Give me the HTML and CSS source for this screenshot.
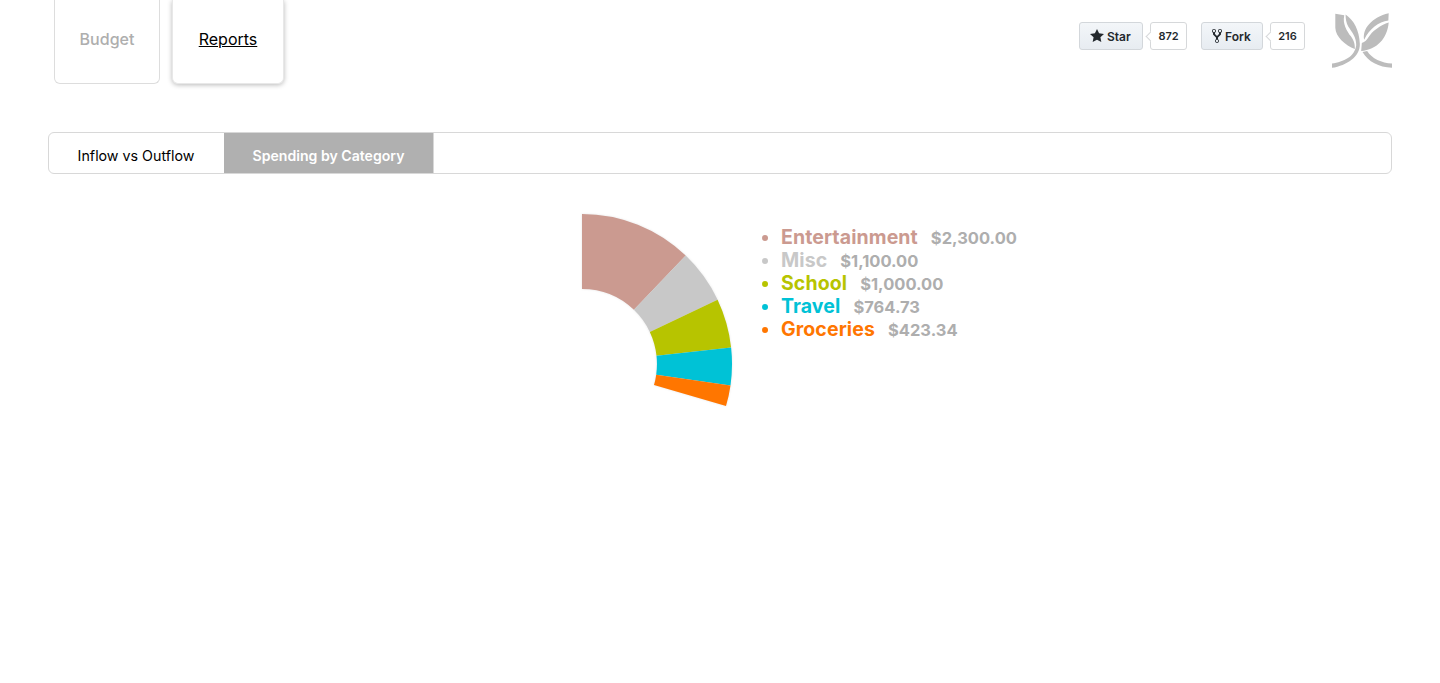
FILE: index.html
```html
<!DOCTYPE html>
<html lang="en">
<head>
<meta charset="utf-8">
<title>Reports</title>
<link rel="stylesheet" href="styles.css">
</head>
<body>
<header class="header">
  <nav class="nav">
    <a class="nav-card budget">Budget</a>
    <a class="nav-card active">Reports</a>
  </nav>
  <div class="gh">
    <div class="gh-group">
      <span class="gh-btn"><svg class="ic-star" viewBox="0 0 14 16"><path d="M14 6l-4.9-.64L7 1 4.9 5.36 0 6l3.6 3.26L2.67 14 7 11.67 11.33 14l-.93-4.74L14 6z"/></svg>Star</span>
      <span class="gh-count">872</span>
    </div>
    <div class="gh-group">
      <span class="gh-btn"><svg class="ic-fork" viewBox="0 0 10 16"><path d="M8 1a1.993 1.993 0 0 0-1 3.72V6L5 8 3 6V4.72A1.993 1.993 0 0 0 2 1a1.993 1.993 0 0 0-1 3.72V6.5l3 3v1.78A1.993 1.993 0 0 0 5 15a1.993 1.993 0 0 0 1-3.72V9.5l3-3V4.72A1.993 1.993 0 0 0 8 1zM2 4.2C1.34 4.2.8 3.65.8 3c0-.65.55-1.2 1.2-1.2.65 0 1.2.55 1.2 1.2 0 .65-.55 1.2-1.2 1.2zm3 10c-.66 0-1.2-.55-1.2-1.2 0-.65.55-1.2 1.2-1.2.65 0 1.2.55 1.2 1.2 0 .65-.55 1.2-1.2 1.2zm3-10c-.66 0-1.2-.55-1.2-1.2 0-.65.55-1.2 1.2-1.2.65 0 1.2.55 1.2 1.2 0 .65-.55 1.2-1.2 1.2z"/></svg>Fork</span>
      <span class="gh-count">216</span>
    </div>
  </div>
  <svg class="logo" viewBox="815 38 181 165">
    <path d="M825 40 L852 44 C846 70 860 92 872 108 C882 122 884 132 884 146 C855 135 826 110 825 82 Z"/>
    <path d="M856 42 C882 60 897 90 899 130 C900 170 860 195 815 203 L815 190 C850 185 884 170 888 135 C889 110 875 95 864 78 C858 68 856 55 856 42 Z"/>
    <path d="M986 38 L985 60 C955 64 928 85 912 118 C906 85 935 50 986 38 Z"/>
    <path d="M986 66 C982 115 950 148 903 152 L905 128 C925 122 925 100 950 85 C960 76 975 70 986 66 Z"/>
    <path d="M921 152 C935 175 965 188 996 190 L996 203 C955 200 925 185 907 155 Z"/>
  </svg>
</header>

<main class="main">
  <div class="tabs">
    <a class="tab">Inflow vs Outflow</a>
    <a class="tab tab-active">Spending by Category</a>
  </div>
  <section class="report">
    <svg class="chart" viewBox="0 0 300 300" width="300" height="300">
      <path class="s-ent" d="M150 0 A150 150 0 0 1 253.7 41.6 L201.9 95.8 A75 75 0 0 0 150 75 Z"/>
      <path class="s-misc" d="M253.7 41.6 A150 150 0 0 1 285.6 85.8 L217.8 117.9 A75 75 0 0 0 201.9 95.8 Z"/>
      <path class="s-school" d="M285.6 85.8 A150 150 0 0 1 299.1 133.5 L224.5 141.8 A75 75 0 0 0 217.8 117.9 Z"/>
      <path class="s-travel" d="M299.1 133.5 A150 150 0 0 1 298.5 171.4 L224.2 160.7 A75 75 0 0 0 224.5 141.8 Z"/>
      <path class="s-groc" d="M298.5 171.4 A150 150 0 0 1 294 192.1 L222 171.1 A75 75 0 0 0 224.2 160.7 Z"/>
    </svg>
    <ul class="legend">
      <li class="c-ent"><span class="name">Entertainment</span><span class="amt">$2,300.00</span></li>
      <li class="c-misc"><span class="name">Misc</span><span class="amt">$1,100.00</span></li>
      <li class="c-school"><span class="name">School</span><span class="amt">$1,000.00</span></li>
      <li class="c-travel"><span class="name">Travel</span><span class="amt">$764.73</span></li>
      <li class="c-groc"><span class="name">Groceries</span><span class="amt">$423.34</span></li>
    </ul>
  </section>
</main>
</body>
</html>
```
FILE: styles.css
```css
* { box-sizing: border-box; }
html, body { margin: 0; padding: 0; background: #fff; }
body { font-family: Inter, "Liberation Sans", sans-serif; color: #000; height: 683px; overflow: hidden; }

.header { display: flex; align-items: flex-start; padding: 0 48px 0 54px; height: 84px; }
.nav { display: flex; gap: 12px; }
.nav-card {
  display: flex; align-items: center; justify-content: center;
  height: 84px; padding-bottom: 5px; font-size: 16px;
  background: #fff; border: 1px solid #ddd; border-top: 0; border-radius: 0 0 6px 6px;
}
.budget { width: 106px; color: #aeaeae; font-weight: 500; }
.active { width: 112px; color: #000; text-decoration: underline; box-shadow: 0 1px 5px rgba(0,0,0,.28); border-color: #e8e8e8; }

.gh { display: flex; gap: 14px; margin-left: auto; margin-top: 22px; margin-right: 27px; }
.gh-group { display: flex; gap: 7px; }
.gh-btn {
  display: flex; align-items: center; gap: 3px; height: 28px; padding: 0 10px;
  font-size: 12px; font-weight: 600; color: #24292e;
  background: linear-gradient(#f3f6f9, #e7ecf1); border: 1px solid #d3d7db; border-radius: 3px;
}
.gh-group:first-child .gh-btn { width: 64px; }
.gh-group:last-child .gh-btn { width: 62px; }
.ic-star { width: 14px; height: 16px; fill: #24292e; }
.ic-fork { width: 10px; height: 16px; fill: #24292e; }
.gh-count {
  position: relative; display: flex; align-items: center; justify-content: center;
  height: 28px; width: 37px; font-size: 11px; font-weight: 600; color: #24292e;
  background: #fff; border: 1px solid #d6d8da; border-radius: 3px;
}
.gh-group:last-child .gh-count { width: 35px; }
.gh-count::before {
  content: ""; position: absolute; left: -4px; top: 10px; width: 6px; height: 6px;
  background: #fff; border-left: 1px solid #d6d8da; border-bottom: 1px solid #d6d8da;
  transform: rotate(45deg);
}
.logo { width: 60px; height: 55px; margin-top: 13px; fill: #bcbcbc; flex: none; }

.main { padding: 48px 48px 0; }
.tabs { display: flex; height: 42px; border: 1px solid #d8d8d8; border-radius: 6px; overflow: hidden; }
.tab { display: flex; align-items: center; justify-content: center; font-size: 14.25px; padding-top: 4px; width: 175px; border-right: 1px solid #fff; }
.tab-active { width: 210px; background: #b0b0b0; color: #fff; font-size: 14.1px; font-weight: 600; border-right: 1px solid #d8d8d8; }

.report { display: flex; align-items: flex-start; padding: 40px 0 0 384px; }
.chart { flex: none; overflow: visible; filter: drop-shadow(0 0 1px rgba(0,0,0,.1)); }
.s-ent { fill: #cb9a90; }
.s-misc { fill: #c8c8c8; }
.s-school { fill: #b7c400; }
.s-travel { fill: #00c2d6; }
.s-groc { fill: #ff7600; }

.legend { list-style: disc; margin: 12px 0 0; padding: 0 0 0 49px; font-size: 19.5px; font-weight: 700; line-height: 23px; }
.legend li { white-space: nowrap; height: 23px; }
.name { margin-right: 13px; line-height: 1; letter-spacing: .1px; }
.amt { color: #aeaeae; font-size: 16.5px; line-height: 1; }
.c-ent { color: #cb9a90; }
.c-misc { color: #c8c8c8; }
.c-school { color: #b7c400; }
.c-travel { color: #00c2d6; }
.c-groc { color: #ff7600; }
```
